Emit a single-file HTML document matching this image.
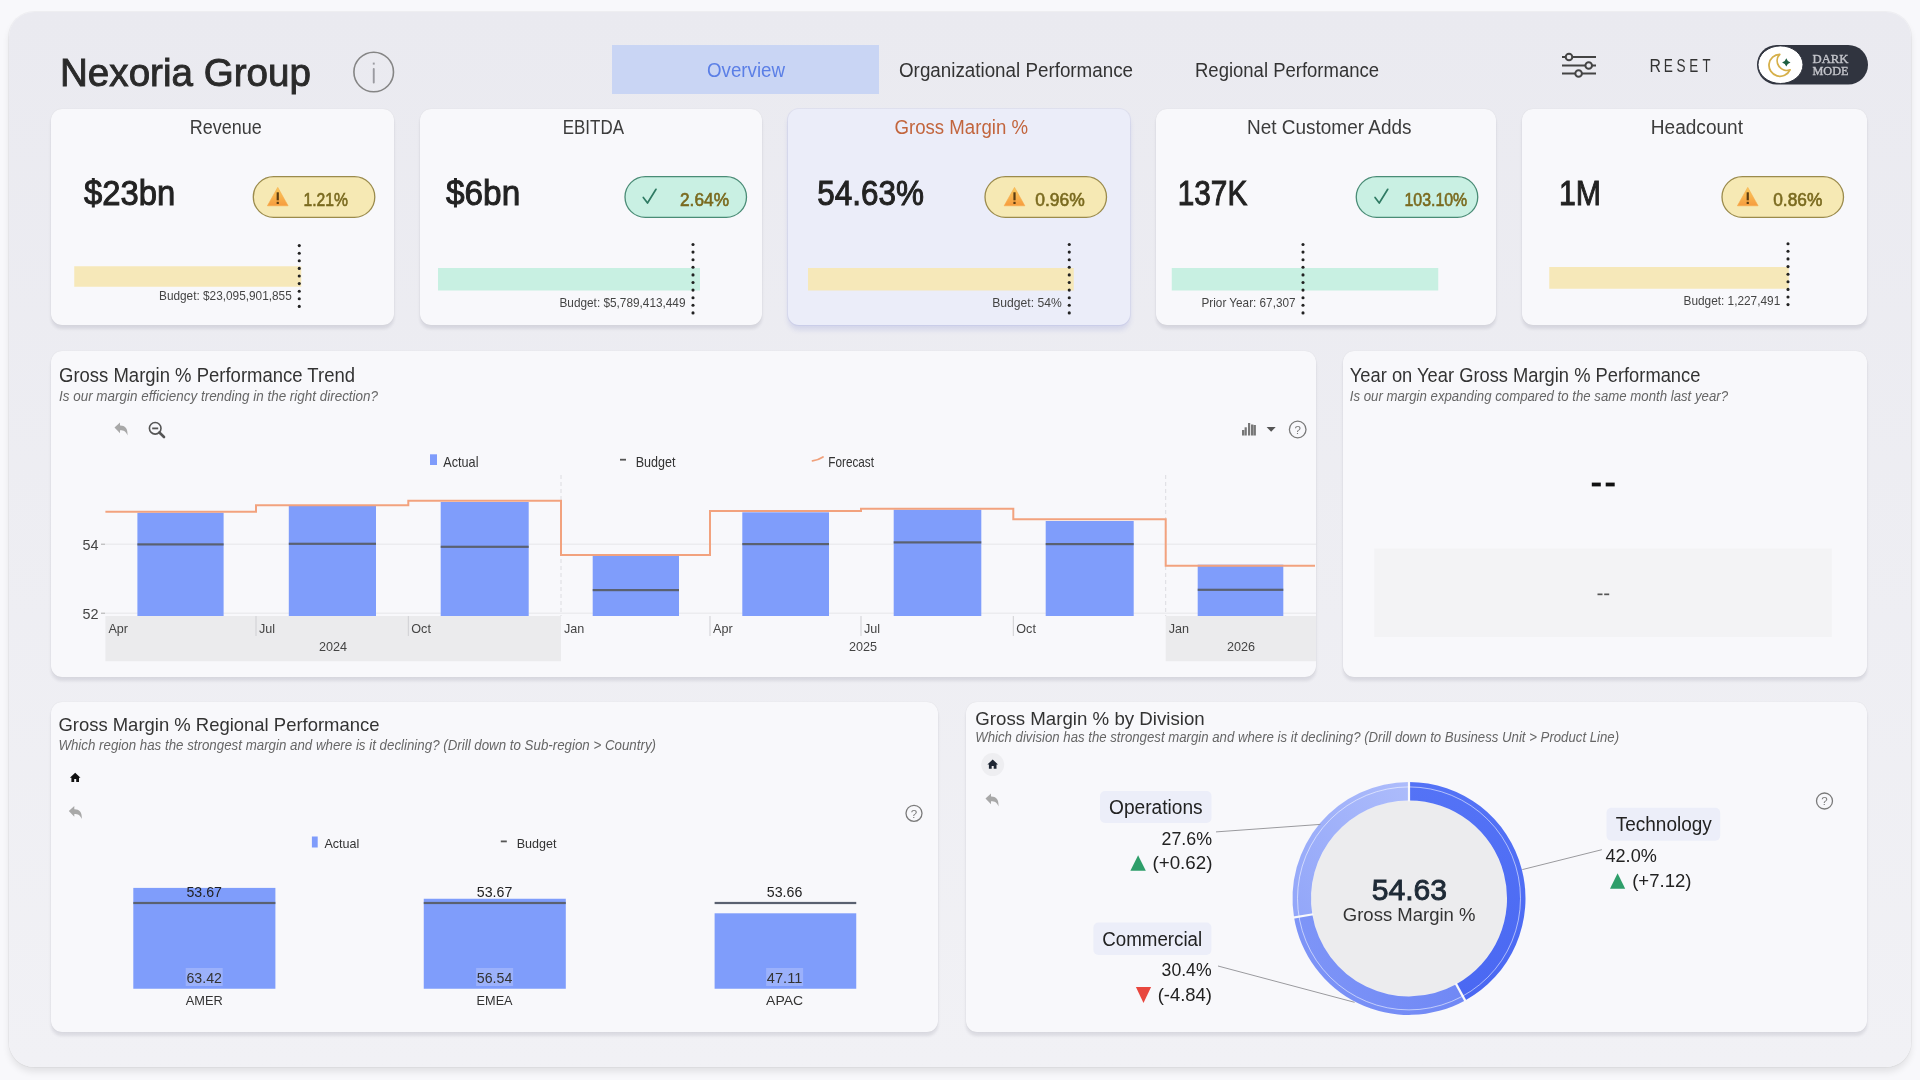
<!DOCTYPE html>
<html><head><meta charset="utf-8">
<style>
*{margin:0;padding:0;box-sizing:border-box}
html,body{width:1920px;height:1080px;overflow:hidden;background:#f8f8fb;font-family:"Liberation Sans", sans-serif;color:#333}
.a{position:absolute}
.frame{left:9px;top:12px;width:1902px;height:1055px;border-radius:25px;background:linear-gradient(#eaeaf0,#f1f1f5);box-shadow:0 5px 7px rgba(0,0,0,0.09), 0 0 0 1px rgba(0,0,0,0.035)}
.card{position:absolute;background:#f8f8fb;border-radius:11px;box-shadow:0 4px 3px rgba(40,40,70,0.10), 0 0 1px rgba(0,0,0,0.12)}
svg{position:absolute;left:0;top:0;will-change:transform}
</style></head><body>
<div class="a frame"></div>
<div class="card" style="left:51px;top:108.5px;width:343px;height:216.5px"></div>
<div class="card" style="left:420px;top:108.5px;width:341.5px;height:216.5px"></div>
<div class="card" style="left:788px;top:108.5px;width:341.5px;height:216.5px;background:#ebedf9;box-shadow:0 5px 5px rgba(90,100,200,0.16), 0 0 0 1px rgba(120,130,220,0.10)"></div>
<div class="card" style="left:1155.5px;top:108.5px;width:340.5px;height:216.5px"></div>
<div class="card" style="left:1522px;top:108.5px;width:345px;height:216px"></div>
<div class="card" style="left:51px;top:351px;width:1265px;height:326px"></div>
<div class="card" style="left:1342.5px;top:351px;width:524.5px;height:326px"></div>
<div class="card" style="left:51px;top:702px;width:887px;height:330px"></div>
<div class="card" style="left:966px;top:702px;width:901px;height:330px"></div>
<svg width="1920" height="1080" viewBox="0 0 1920 1080" font-family='"Liberation Sans", sans-serif'>
<defs>
<linearGradient id="wgr" x1="0" y1="0" x2="0" y2="1"><stop offset="0" stop-color="#fbcb5c"/><stop offset="1" stop-color="#f69b3e"/></linearGradient>
<linearGradient id="gtech" x1="0" y1="0" x2="0" y2="1"><stop offset="0" stop-color="#5473f6"/><stop offset="1" stop-color="#4a68f2"/></linearGradient>
<linearGradient id="gcom" x1="0" y1="0" x2="1" y2="0"><stop offset="0" stop-color="#7e95f7"/><stop offset="1" stop-color="#7088f5"/></linearGradient>
<linearGradient id="gops" x1="0" y1="1" x2="1" y2="0"><stop offset="0" stop-color="#92a6f9"/><stop offset="1" stop-color="#adbcfb"/></linearGradient>
</defs>
<text x="60" y="86" font-size="39" fill="#2a2a2a" textLength="251" lengthAdjust="spacingAndGlyphs" stroke="#2a2a2a" stroke-width="0.9">Nexoria Group</text>
<circle cx="373.7" cy="72" r="19.8" fill="none" stroke="#858585" stroke-width="1.6"/>
<rect x="372.8" y="62.6" width="1.9" height="2" fill="#9a9aa0"/><rect x="372.8" y="68" width="1.9" height="15.5" rx="0.9" fill="#9a9aa0"/>
<rect x="612" y="45" width="267" height="49" fill="#c9d5f4"/>
<text x="707" y="77" font-size="20" fill="#5b7fe6" textLength="78" lengthAdjust="spacingAndGlyphs">Overview</text>
<text x="899" y="77" font-size="20" fill="#333" textLength="234" lengthAdjust="spacingAndGlyphs">Organizational Performance</text>
<text x="1195" y="77" font-size="20" fill="#333" textLength="184" lengthAdjust="spacingAndGlyphs">Regional Performance</text>
<g stroke="#444" stroke-width="2" fill="none"><line x1="1562" y1="57" x2="1596" y2="57"/><line x1="1562" y1="65.5" x2="1596" y2="65.5"/><line x1="1562" y1="73.5" x2="1596" y2="73.5"/><circle cx="1569" cy="57" r="3.3" fill="#ebebf0"/><circle cx="1588.7" cy="65.5" r="3.3" fill="#ebebf0"/><circle cx="1578.6" cy="73.5" r="3.3" fill="#ebebf0"/></g>
<text x="0" y="0" font-size="17.5" fill="#333" transform="translate(1649.38,71.7) scale(0.906,1)">R</text>
<text x="0" y="0" font-size="17.5" fill="#333" transform="translate(1663.85,71.7) scale(0.780,1)">E</text>
<text x="0" y="0" font-size="17.5" fill="#333" transform="translate(1676.52,71.7) scale(0.777,1)">S</text>
<text x="0" y="0" font-size="17.5" fill="#333" transform="translate(1689.36,71.7) scale(0.769,1)">E</text>
<text x="0" y="0" font-size="17.5" fill="#333" transform="translate(1702.44,71.7) scale(0.751,1)">T</text>
<rect x="1757" y="45" width="111" height="39.5" fill="#30343f" rx="19.75"/>
<ellipse cx="1780.5" cy="64.7" rx="22.5" ry="18.8" fill="#fff" stroke="#30343f" stroke-width="1"/>
<path d="M1779.73 54.30 A11 11 0 1 0 1790.02 69.84 A9.6 9.6 0 0 1 1779.73 54.30 Z" fill="none" stroke="#d6b04a" stroke-width="1.8" stroke-linejoin="round"/>
<path d="M1786.3 58.199999999999996 Q1787.2 61.5 1790.5 62.4 Q1787.2 63.3 1786.3 66.6 Q1785.3999999999999 63.3 1782.1 62.4 Q1785.3999999999999 61.5 1786.3 58.199999999999996 Z" fill="#1d5e40"/>
<text x="1812.5" y="62.8" font-size="11.5" fill="#c3c4ca" textLength="36" lengthAdjust="spacingAndGlyphs" stroke="#c3c4ca" stroke-width="0.35" font-family='"Liberation Serif", serif'>DARK</text>
<text x="1812.5" y="74.8" font-size="11.5" fill="#c3c4ca" textLength="36" lengthAdjust="spacingAndGlyphs" stroke="#c3c4ca" stroke-width="0.35" font-family='"Liberation Serif", serif'>MODE</text>
<text x="189.75" y="134.25" font-size="19.5" fill="#3c3c3c" textLength="72.0" lengthAdjust="spacingAndGlyphs">Revenue</text>
<text x="84" y="204.8" font-size="35" fill="#222" textLength="91.25" lengthAdjust="spacingAndGlyphs" stroke="#222" stroke-width="1.0">$23bn</text>
<rect x="253.3" y="176.7" width="121.5" height="40.6" fill="#f6e9b4" rx="20.3" stroke="#9b8b4c" stroke-width="1.3"/>
<g transform="translate(267,186.8)"><path d="M10.75 0.6 L21.1 19 L0.4 19 Z" fill="url(#wgr)" stroke="#f6a94a" stroke-width="0.6" stroke-linejoin="round"/><rect x="9.65" y="5.5" width="2.2" height="8" fill="#5b3d12"/><rect x="9.65" y="15" width="2.2" height="2.2" fill="#5b3d12"/></g>
<text x="303.5" y="206" font-size="18" fill="#7a6a1f" textLength="44.5" lengthAdjust="spacingAndGlyphs" stroke="#7a6a1f" stroke-width="0.6">1.21%</text>
<rect x="74.25" y="266.25" width="227.0" height="20.5" fill="#f6e8b9"/>
<circle cx="299.25" cy="245.6" r="1.55" fill="#222"/>
<circle cx="299.25" cy="253.2" r="1.55" fill="#222"/>
<circle cx="299.25" cy="260.8" r="1.55" fill="#222"/>
<circle cx="299.25" cy="268.4" r="1.55" fill="#222"/>
<circle cx="299.25" cy="276.0" r="1.55" fill="#222"/>
<circle cx="299.25" cy="283.6" r="1.55" fill="#222"/>
<circle cx="299.25" cy="291.2" r="1.55" fill="#222"/>
<circle cx="299.25" cy="298.8" r="1.55" fill="#222"/>
<circle cx="299.25" cy="306.4" r="1.55" fill="#222"/>
<text x="159" y="300" font-size="13.5" fill="#444" textLength="132.75" lengthAdjust="spacingAndGlyphs">Budget: $23,095,901,855</text>
<text x="562.75" y="134.25" font-size="19.5" fill="#3c3c3c" textLength="61.25" lengthAdjust="spacingAndGlyphs">EBITDA</text>
<text x="446" y="204.8" font-size="35" fill="#222" textLength="74.25" lengthAdjust="spacingAndGlyphs" stroke="#222" stroke-width="1.0">$6bn</text>
<rect x="625" y="176.7" width="121.5" height="40.6" fill="#c9f0e3" rx="20.3" stroke="#4a8c76" stroke-width="1.3"/>
<path d="M643.3 197.5 L647.5 203.0 L656.0 189.3" fill="none" stroke="#2f7a63" stroke-width="1.7" stroke-linecap="round" stroke-linejoin="round"/>
<text x="680" y="206" font-size="18" fill="#7a6a1f" textLength="49" lengthAdjust="spacingAndGlyphs" stroke="#7a6a1f" stroke-width="0.6">2.64%</text>
<rect x="438" y="268" width="262" height="22.5" fill="#c8f0e2"/>
<circle cx="693" cy="244.5" r="1.55" fill="#222"/>
<circle cx="693" cy="252.1" r="1.55" fill="#222"/>
<circle cx="693" cy="259.7" r="1.55" fill="#222"/>
<circle cx="693" cy="267.3" r="1.55" fill="#222"/>
<circle cx="693" cy="274.9" r="1.55" fill="#222"/>
<circle cx="693" cy="282.5" r="1.55" fill="#222"/>
<circle cx="693" cy="290.1" r="1.55" fill="#222"/>
<circle cx="693" cy="297.7" r="1.55" fill="#222"/>
<circle cx="693" cy="305.3" r="1.55" fill="#222"/>
<circle cx="693" cy="312.9" r="1.55" fill="#222"/>
<text x="559.5" y="307" font-size="13.5" fill="#444" textLength="126.0" lengthAdjust="spacingAndGlyphs">Budget: $5,789,413,449</text>
<text x="894.5" y="134.25" font-size="19.5" fill="#c2653d" textLength="133.5" lengthAdjust="spacingAndGlyphs">Gross Margin %</text>
<text x="817.25" y="204.8" font-size="35" fill="#222" textLength="106.75" lengthAdjust="spacingAndGlyphs" stroke="#222" stroke-width="1.0">54.63%</text>
<rect x="985" y="176.7" width="121.5" height="40.6" fill="#f6e9b4" rx="20.3" stroke="#9b8b4c" stroke-width="1.3"/>
<g transform="translate(1003.75,186.8)"><path d="M10.75 0.6 L21.1 19 L0.4 19 Z" fill="url(#wgr)" stroke="#f6a94a" stroke-width="0.6" stroke-linejoin="round"/><rect x="9.65" y="5.5" width="2.2" height="8" fill="#5b3d12"/><rect x="9.65" y="15" width="2.2" height="2.2" fill="#5b3d12"/></g>
<text x="1035.25" y="206" font-size="18" fill="#7a6a1f" textLength="49.5" lengthAdjust="spacingAndGlyphs" stroke="#7a6a1f" stroke-width="0.6">0.96%</text>
<rect x="808" y="268" width="265.75" height="22.5" fill="#f6e8b9"/>
<circle cx="1069.25" cy="244.5" r="1.55" fill="#222"/>
<circle cx="1069.25" cy="252.1" r="1.55" fill="#222"/>
<circle cx="1069.25" cy="259.7" r="1.55" fill="#222"/>
<circle cx="1069.25" cy="267.3" r="1.55" fill="#222"/>
<circle cx="1069.25" cy="274.9" r="1.55" fill="#222"/>
<circle cx="1069.25" cy="282.5" r="1.55" fill="#222"/>
<circle cx="1069.25" cy="290.1" r="1.55" fill="#222"/>
<circle cx="1069.25" cy="297.7" r="1.55" fill="#222"/>
<circle cx="1069.25" cy="305.3" r="1.55" fill="#222"/>
<circle cx="1069.25" cy="312.9" r="1.55" fill="#222"/>
<text x="992.25" y="306.75" font-size="13.5" fill="#444" textLength="69.5" lengthAdjust="spacingAndGlyphs">Budget: 54%</text>
<text x="1247" y="134.25" font-size="19.5" fill="#3c3c3c" textLength="164.5" lengthAdjust="spacingAndGlyphs">Net Customer Adds</text>
<text x="1177.75" y="204.8" font-size="35" fill="#222" textLength="69.5" lengthAdjust="spacingAndGlyphs" stroke="#222" stroke-width="1.0">137K</text>
<rect x="1356.25" y="176.7" width="121.5" height="40.6" fill="#c9f0e3" rx="20.3" stroke="#4a8c76" stroke-width="1.3"/>
<path d="M1375.05 197.5 L1379.25 203.0 L1387.75 189.3" fill="none" stroke="#2f7a63" stroke-width="1.7" stroke-linecap="round" stroke-linejoin="round"/>
<text x="1404.5" y="206" font-size="18" fill="#7a6a1f" textLength="62.75" lengthAdjust="spacingAndGlyphs" stroke="#7a6a1f" stroke-width="0.6">103.10%</text>
<rect x="1171.75" y="268" width="266.5" height="22.5" fill="#c8f0e2"/>
<circle cx="1303" cy="244.5" r="1.55" fill="#222"/>
<circle cx="1303" cy="252.1" r="1.55" fill="#222"/>
<circle cx="1303" cy="259.7" r="1.55" fill="#222"/>
<circle cx="1303" cy="267.3" r="1.55" fill="#222"/>
<circle cx="1303" cy="274.9" r="1.55" fill="#222"/>
<circle cx="1303" cy="282.5" r="1.55" fill="#222"/>
<circle cx="1303" cy="290.1" r="1.55" fill="#222"/>
<circle cx="1303" cy="297.7" r="1.55" fill="#222"/>
<circle cx="1303" cy="305.3" r="1.55" fill="#222"/>
<circle cx="1303" cy="312.9" r="1.55" fill="#222"/>
<text x="1201.5" y="306.75" font-size="13.5" fill="#444" textLength="94.0" lengthAdjust="spacingAndGlyphs">Prior Year: 67,307</text>
<text x="1650.75" y="134.25" font-size="19.5" fill="#3c3c3c" textLength="92.25" lengthAdjust="spacingAndGlyphs">Headcount</text>
<text x="1559" y="204.8" font-size="35" fill="#222" textLength="42" lengthAdjust="spacingAndGlyphs" stroke="#222" stroke-width="1.0">1M</text>
<rect x="1722" y="176.7" width="121.5" height="40.6" fill="#f6e9b4" rx="20.3" stroke="#9b8b4c" stroke-width="1.3"/>
<g transform="translate(1737,186.8)"><path d="M10.75 0.6 L21.1 19 L0.4 19 Z" fill="url(#wgr)" stroke="#f6a94a" stroke-width="0.6" stroke-linejoin="round"/><rect x="9.65" y="5.5" width="2.2" height="8" fill="#5b3d12"/><rect x="9.65" y="15" width="2.2" height="2.2" fill="#5b3d12"/></g>
<text x="1773.25" y="206" font-size="18" fill="#7a6a1f" textLength="49.0" lengthAdjust="spacingAndGlyphs" stroke="#7a6a1f" stroke-width="0.6">0.86%</text>
<rect x="1549.25" y="267" width="239.5" height="21.75" fill="#f6e8b9"/>
<circle cx="1788" cy="243.8" r="1.55" fill="#222"/>
<circle cx="1788" cy="251.3" r="1.55" fill="#222"/>
<circle cx="1788" cy="258.9" r="1.55" fill="#222"/>
<circle cx="1788" cy="266.6" r="1.55" fill="#222"/>
<circle cx="1788" cy="274.2" r="1.55" fill="#222"/>
<circle cx="1788" cy="281.8" r="1.55" fill="#222"/>
<circle cx="1788" cy="289.4" r="1.55" fill="#222"/>
<circle cx="1788" cy="297.0" r="1.55" fill="#222"/>
<circle cx="1788" cy="304.6" r="1.55" fill="#222"/>
<text x="1683.5" y="304.5" font-size="13.5" fill="#444" textLength="96.75" lengthAdjust="spacingAndGlyphs">Budget: 1,227,491</text>
<text x="59" y="382" font-size="19.3" fill="#333" textLength="296" lengthAdjust="spacingAndGlyphs">Gross Margin % Performance Trend</text>
<text x="59" y="401.25" font-size="14.5" fill="#666" textLength="319" lengthAdjust="spacingAndGlyphs" font-style="italic">Is our margin efficiency trending in the right direction?</text>
<g transform="translate(114,422) scale(1.0)"><path d="M0.5 5.5 L6 0.5 L6 3.6 C10.5 3.4 14 6 13.5 13.5 C12 9.5 9.8 8.3 6 8.3 L6 11.2 Z" fill="#a8a8a8"/></g>
<g><circle cx="155.2" cy="428.3" r="5.8" fill="none" stroke="#555" stroke-width="1.6"/><rect x="152.2" y="427.5" width="6" height="1.8" fill="#555"/><line x1="159.4" y1="432.5" x2="164" y2="437" stroke="#555" stroke-width="2.6" stroke-linecap="round"/></g>
<g fill="#777"><rect x="1242" y="430" width="2.4" height="5.5"/><rect x="1244.6" y="427.3" width="2.2" height="8.2"/><rect x="1248" y="423" width="2.2" height="12.5"/><rect x="1251" y="424.5" width="2.4" height="11"/><rect x="1253.5" y="425" width="2.4" height="10.5"/></g>
<path d="M1266.6 427.1 L1275.7 427.1 L1271.15 431.8 Z" fill="#555"/>
<circle cx="1297.7" cy="429.5" r="8.3" fill="none" stroke="#7a7a7a" stroke-width="1.3"/>
<text x="1297.7" y="433.7" font-size="11.5" fill="#7a7a7a" text-anchor="middle">?</text>
<rect x="430" y="454.3" width="7" height="10.7" fill="#7f9cfb"/>
<text x="443.25" y="466.75" font-size="14.5" fill="#333" textLength="35.25" lengthAdjust="spacingAndGlyphs">Actual</text>
<rect x="620" y="458.8" width="6" height="1.8" fill="#555"/>
<text x="635.75" y="466.75" font-size="14.5" fill="#333" textLength="39.75" lengthAdjust="spacingAndGlyphs">Budget</text>
<path d="M812.5 460.8 Q818 460.3 823 457" fill="none" stroke="#f0a07a" stroke-width="1.8" stroke-linecap="round"/>
<text x="828.25" y="466.75" font-size="14.5" fill="#333" textLength="45.75" lengthAdjust="spacingAndGlyphs">Forecast</text>
<line x1="105" y1="544.2" x2="1316" y2="544.2" stroke="#e6e6e9" stroke-width="1"/>
<line x1="105" y1="613.2" x2="1316" y2="613.2" stroke="#e6e6e9" stroke-width="1"/>
<line x1="101" y1="544.2" x2="105" y2="544.2" stroke="#aaa" stroke-width="1"/><line x1="101" y1="613.2" x2="105" y2="613.2" stroke="#aaa" stroke-width="1"/>
<text x="98.5" y="550" font-size="15" fill="#444" text-anchor="end" textLength="16" lengthAdjust="spacingAndGlyphs">54</text>
<text x="98.5" y="618.5" font-size="15" fill="#444" text-anchor="end" textLength="16" lengthAdjust="spacingAndGlyphs">52</text>
<rect x="105.4" y="616" width="455.6" height="45.2" fill="#ebebed"/>
<rect x="1165.7" y="616" width="150.3" height="45.2" fill="#ebebed"/>
<line x1="561" y1="475" x2="561" y2="616" stroke="#dcdce0" stroke-width="1" stroke-dasharray="4,3"/>
<line x1="1165.7" y1="475" x2="1165.7" y2="616" stroke="#dcdce0" stroke-width="1" stroke-dasharray="4,3"/>
<rect x="137.4" y="512.7" width="86.2" height="103.3" fill="#7f9dfb"/>
<rect x="137.4" y="543.3" width="86.2" height="2.2" fill="#5a6170"/>
<rect x="288.8" y="506" width="87.2" height="110" fill="#7f9dfb"/>
<rect x="288.8" y="542.7" width="87.2" height="2.2" fill="#5a6170"/>
<rect x="440.7" y="502" width="88.0" height="114" fill="#7f9dfb"/>
<rect x="440.7" y="545.7" width="88.0" height="2.2" fill="#5a6170"/>
<rect x="592.7" y="555.3" width="86.3" height="60.7" fill="#7f9dfb"/>
<rect x="592.7" y="589" width="86.3" height="2.2" fill="#5a6170"/>
<rect x="742.3" y="512.3" width="86.7" height="103.7" fill="#7f9dfb"/>
<rect x="742.3" y="543" width="86.7" height="2.2" fill="#5a6170"/>
<rect x="893.7" y="509.7" width="87.6" height="106.3" fill="#7f9dfb"/>
<rect x="893.7" y="541.3" width="87.6" height="2.2" fill="#5a6170"/>
<rect x="1045.7" y="521" width="88.0" height="95" fill="#7f9dfb"/>
<rect x="1045.7" y="543" width="88.0" height="2.2" fill="#5a6170"/>
<rect x="1197.7" y="564.7" width="85.6" height="51.3" fill="#7f9dfb"/>
<rect x="1197.7" y="588.7" width="85.6" height="2.2" fill="#5a6170"/>
<path d="M105.4 511.7 L256 511.7 L256 505.3 L408.3 505.3 L408.3 500.7 L561 500.7 L561 555 L710 555 L710 511 L861 511 L861 508.7 L1013.3 508.7 L1013.3 519.3 L1165.7 519.3 L1165.7 565.7 L1315 565.7" fill="none" stroke="#f2a27e" stroke-width="2"/>
<text x="108.4" y="632.7" font-size="12.6" fill="#444">Apr</text>
<line x1="256" y1="616" x2="256" y2="636" stroke="#cfcfd3" stroke-width="1"/>
<text x="259" y="632.7" font-size="12.6" fill="#444">Jul</text>
<line x1="408.3" y1="616" x2="408.3" y2="636" stroke="#cfcfd3" stroke-width="1"/>
<text x="411.3" y="632.7" font-size="12.6" fill="#444">Oct</text>
<text x="564" y="632.7" font-size="12.6" fill="#444">Jan</text>
<line x1="710" y1="616" x2="710" y2="636" stroke="#cfcfd3" stroke-width="1"/>
<text x="713" y="632.7" font-size="12.6" fill="#444">Apr</text>
<line x1="861" y1="616" x2="861" y2="636" stroke="#cfcfd3" stroke-width="1"/>
<text x="864" y="632.7" font-size="12.6" fill="#444">Jul</text>
<line x1="1013.3" y1="616" x2="1013.3" y2="636" stroke="#cfcfd3" stroke-width="1"/>
<text x="1016.3" y="632.7" font-size="12.6" fill="#444">Oct</text>
<text x="1168.7" y="632.7" font-size="12.6" fill="#444">Jan</text>
<text x="333" y="650.7" font-size="12.6" fill="#444" text-anchor="middle">2024</text>
<text x="863" y="650.7" font-size="12.6" fill="#444" text-anchor="middle">2025</text>
<text x="1241" y="650.7" font-size="12.6" fill="#444" text-anchor="middle">2026</text>
<text x="1349.8" y="382.3" font-size="19.3" fill="#333" textLength="350.6" lengthAdjust="spacingAndGlyphs">Year on Year Gross Margin % Performance</text>
<text x="1349.8" y="401.25" font-size="14.5" fill="#666" textLength="378.2" lengthAdjust="spacingAndGlyphs" font-style="italic">Is our margin expanding compared to the same month last year?</text>
<rect x="1591.8" y="482.6" width="9" height="3.8" fill="#111"/>
<rect x="1605.7" y="482.6" width="9" height="3.8" fill="#111"/>
<rect x="1374.3" y="548.5" width="457.6" height="88.5" fill="#f3f3f5"/>
<rect x="1597.5" y="593.5" width="5" height="1.7" fill="#555"/>
<rect x="1604.2" y="593.5" width="5" height="1.7" fill="#555"/>
<text x="58.4" y="731.25" font-size="19" fill="#333" textLength="321.1" lengthAdjust="spacingAndGlyphs">Gross Margin % Regional Performance</text>
<text x="58.4" y="749.6" font-size="14.5" fill="#666" textLength="597.6" lengthAdjust="spacingAndGlyphs" font-style="italic">Which region has the strongest margin and where is it declining? (Drill down to Sub-region &gt; Country)</text>
<g transform="translate(75.2,777.5) scale(1.0)" fill="#111"><path d="M0 -4.8 L5.3 0.2 L3.8 0.2 L3.8 4.5 L1 4.5 L1 1.6 L-1 1.6 L-1 4.5 L-3.8 4.5 L-3.8 0.2 L-5.3 0.2 Z"/></g>
<g transform="translate(68.3,805.6) scale(1.0)"><path d="M0.5 5.5 L6 0.5 L6 3.6 C10.5 3.4 14 6 13.5 13.5 C12 9.5 9.8 8.3 6 8.3 L6 11.2 Z" fill="#a8a8a8"/></g>
<circle cx="914" cy="813.3" r="8" fill="none" stroke="#7a7a7a" stroke-width="1.3"/>
<text x="914" y="817.5" font-size="11.5" fill="#7a7a7a" text-anchor="middle">?</text>
<rect x="311.9" y="836.5" width="5.8" height="11" fill="#7f9cfb"/>
<text x="324.4" y="848.3" font-size="13.5" fill="#333" textLength="34.9" lengthAdjust="spacingAndGlyphs">Actual</text>
<rect x="500.8" y="840.5" width="6" height="1.8" fill="#555"/>
<text x="516.7" y="848.4" font-size="13.5" fill="#333" textLength="39.8" lengthAdjust="spacingAndGlyphs">Budget</text>
<rect x="133.3" y="887.9" width="142.1" height="100.85" fill="#7f9dfb"/>
<rect x="133.3" y="901.9" width="142.1" height="2.2" fill="#5a6170"/>
<rect x="185.7" y="968" width="37" height="18" fill="#9bb1fb"/>
<text x="204.2" y="896.7" font-size="14" fill="#222" text-anchor="middle" textLength="35.5" lengthAdjust="spacingAndGlyphs">53.67</text>
<text x="204.2" y="983" font-size="14" fill="#333" text-anchor="middle" textLength="35.5" lengthAdjust="spacingAndGlyphs">63.42</text>
<text x="204.2" y="1004.6" font-size="13.5" fill="#333" text-anchor="middle" textLength="37" lengthAdjust="spacingAndGlyphs">AMER</text>
<rect x="423.75" y="898.75" width="142.05" height="90.0" fill="#7f9dfb"/>
<rect x="423.75" y="901.9" width="142.05" height="2.2" fill="#5a6170"/>
<rect x="476.1" y="968" width="37" height="18" fill="#9bb1fb"/>
<text x="494.6" y="896.7" font-size="14" fill="#222" text-anchor="middle" textLength="35.5" lengthAdjust="spacingAndGlyphs">53.67</text>
<text x="494.6" y="983" font-size="14" fill="#333" text-anchor="middle" textLength="35.5" lengthAdjust="spacingAndGlyphs">56.54</text>
<text x="494.6" y="1004.6" font-size="13.5" fill="#333" text-anchor="middle" textLength="36" lengthAdjust="spacingAndGlyphs">EMEA</text>
<rect x="714.6" y="913.3" width="141.65" height="75.45" fill="#7f9dfb"/>
<rect x="714.6" y="901.9" width="141.65" height="2.2" fill="#5a6170"/>
<rect x="766.1" y="968" width="37" height="18" fill="#9bb1fb"/>
<text x="784.6" y="896.7" font-size="14" fill="#222" text-anchor="middle" textLength="35.5" lengthAdjust="spacingAndGlyphs">53.66</text>
<text x="784.6" y="983" font-size="14" fill="#333" text-anchor="middle" textLength="35.5" lengthAdjust="spacingAndGlyphs">47.11</text>
<text x="784.6" y="1004.6" font-size="13.5" fill="#333" text-anchor="middle" textLength="37" lengthAdjust="spacingAndGlyphs">APAC</text>
<text x="975.25" y="724.6" font-size="19" fill="#333" textLength="229.5" lengthAdjust="spacingAndGlyphs">Gross Margin % by Division</text>
<text x="975.25" y="742.3" font-size="14.5" fill="#666" textLength="643.85" lengthAdjust="spacingAndGlyphs" font-style="italic">Which division has the strongest margin and where is it declining? (Drill down to Business Unit &gt; Product Line)</text>
<circle cx="992.7" cy="764.6" r="11.5" fill="#eeeef1"/>
<g transform="translate(992.7,764.3) scale(1.0)" fill="#1e2633"><path d="M0 -4.8 L5.3 0.2 L3.8 0.2 L3.8 4.5 L1 4.5 L1 1.6 L-1 1.6 L-1 4.5 L-3.8 4.5 L-3.8 0.2 L-5.3 0.2 Z"/></g>
<g transform="translate(985,793) scale(1.0)"><path d="M0.5 5.5 L6 0.5 L6 3.6 C10.5 3.4 14 6 13.5 13.5 C12 9.5 9.8 8.3 6 8.3 L6 11.2 Z" fill="#a8a8a8"/></g>
<circle cx="1824.5" cy="801" r="8" fill="none" stroke="#7a7a7a" stroke-width="1.3"/>
<text x="1824.5" y="805.2" font-size="11.5" fill="#7a7a7a" text-anchor="middle">?</text>
<circle cx="1409" cy="898.4" r="98" fill="#ececee"/>
<path d="M1409.00 781.90 A116.5 116.5 0 0 1 1465.12 1000.49 L1456.21 984.28 A98 98 0 0 0 1409.00 800.40 Z" fill="url(#gtech)"/>
<path d="M1465.12 1000.49 A116.5 116.5 0 0 1 1294.06 917.43 L1312.32 914.41 A98 98 0 0 0 1456.21 984.28 Z" fill="url(#gcom)"/>
<path d="M1294.06 917.43 A116.5 116.5 0 0 1 1409.00 781.90 L1409.00 800.40 A98 98 0 0 0 1312.32 914.41 Z" fill="url(#gops)"/>
<line x1="1409.00" y1="801.40" x2="1409.00" y2="780.90" stroke="#f8f8fb" stroke-width="2.2"/>
<line x1="1455.73" y1="983.40" x2="1465.61" y2="1001.37" stroke="#f8f8fb" stroke-width="2.2"/>
<line x1="1313.30" y1="914.24" x2="1293.08" y2="917.59" stroke="#f8f8fb" stroke-width="2.2"/>
<circle cx="1409" cy="898.4" r="111.5" fill="none" stroke="#ffffff" stroke-opacity="0.55" stroke-width="1"/>
<text x="1371.7" y="900" font-size="29.8" fill="#1e2a36" textLength="75.4" lengthAdjust="spacingAndGlyphs" stroke="#1e2a36" stroke-width="0.9">54.63</text>
<text x="1342.8" y="921" font-size="18.3" fill="#333" textLength="132.7" lengthAdjust="spacingAndGlyphs">Gross Margin %</text>
<rect x="1100" y="791" width="111.5" height="32" fill="#eceef9" rx="5"/>
<text x="1109" y="813.5" font-size="19.6" fill="#222" textLength="93.7" lengthAdjust="spacingAndGlyphs">Operations</text>
<text x="1212" y="844.8" font-size="19" fill="#222" text-anchor="end" textLength="50.5" lengthAdjust="spacingAndGlyphs">27.6%</text>
<path d="M1130.4 870.7 L1138.1 855.3 L1145.8 870.7 Z" fill="#2e9e6a"/>
<text x="1212.4" y="869.1" font-size="19" fill="#222" text-anchor="end" textLength="59.9" lengthAdjust="spacingAndGlyphs">(+0.62)</text>
<rect x="1093.4" y="922.6" width="118" height="32.3" fill="#eceef9" rx="5"/>
<text x="1102.3" y="946.3" font-size="19.6" fill="#222" textLength="99.9" lengthAdjust="spacingAndGlyphs">Commercial</text>
<text x="1211.6" y="976.1" font-size="19" fill="#222" text-anchor="end" textLength="50" lengthAdjust="spacingAndGlyphs">30.4%</text>
<path d="M1135.9 987.1 L1151.1 987.1 L1143.5 1002.9 Z" fill="#e8473e"/>
<text x="1212" y="1000.5" font-size="19" fill="#222" text-anchor="end" textLength="54.3" lengthAdjust="spacingAndGlyphs">(-4.84)</text>
<rect x="1606.5" y="807.8" width="113.7" height="33" fill="#eceef9" rx="5"/>
<text x="1615.8" y="831.4" font-size="19.6" fill="#222" textLength="96" lengthAdjust="spacingAndGlyphs">Technology</text>
<text x="1605.5" y="861.5" font-size="19" fill="#222" textLength="51.3" lengthAdjust="spacingAndGlyphs">42.0%</text>
<path d="M1610 888.7 L1617.6 873.2 L1625.2 888.7 Z" fill="#2e9e6a"/>
<text x="1632.2" y="887" font-size="19" fill="#222" textLength="59.3" lengthAdjust="spacingAndGlyphs">(+7.12)</text>
<g stroke="#9a9a9e" stroke-width="1" fill="none"><path d="M1216 831.9 L1320.4 824.4"/><path d="M1218 966 L1354.6 1002.3"/><path d="M1522.3 869.6 L1601.9 849.7"/></g>
</svg>
</body></html>
